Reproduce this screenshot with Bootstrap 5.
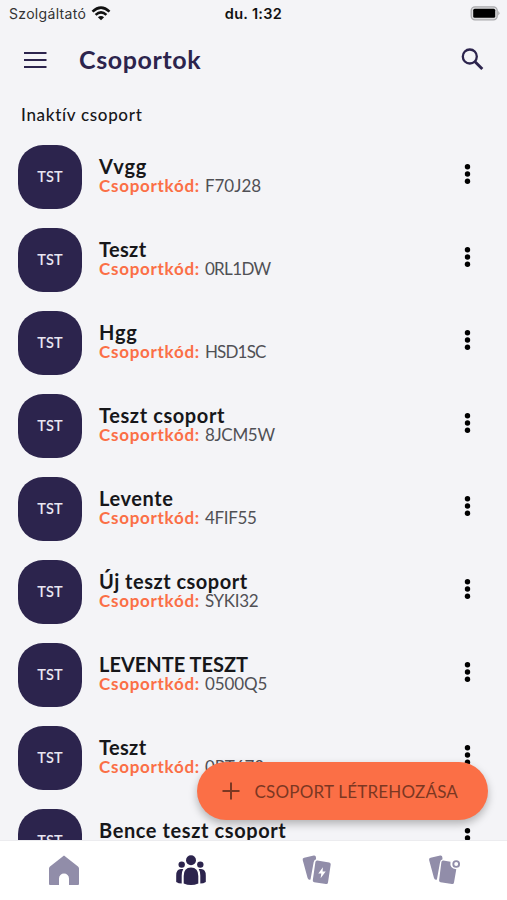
<!DOCTYPE html>
<html lang="hu">
<head>
<meta charset="utf-8">
<meta name="viewport" content="width=device-width, initial-scale=1">
<title>Csoportok</title>
<link href="https://cdn.jsdelivr.net/npm/bootstrap@5.3.0/dist/css/bootstrap.min.css" rel="stylesheet">
<style>
:root { --ink:#2c244d; --accent:#fb6f46; --muted-icon:#918da9; }
body { background:#f4f4f7; font-family:Lato,"Noto Sans",sans-serif; font-variant-ligatures:none; color:#17171a; }
svg { display:block; flex:none; }
.status { height:28px; font-family:Inter,sans-serif; font-size:14px; line-height:28px; padding:0 7px 0 9px; }
.carrier { letter-spacing:.32px; color:#333; }
.wifi { margin-left:5px; margin-bottom:2px; }
.battery { margin-bottom:2px; }
.clock { font-weight:600; font-size:14.5px; letter-spacing:.3px; color:#111; }
.toolbar { height:64px; padding:0 22px 0 24px; }
.title { font-size:25px; font-weight:700; letter-spacing:.6px; color:var(--ink); line-height:32px; margin:0 0 3px 32px; }
.section-title { height:43px; padding:11px 21px 0; font-size:17px; font-weight:500; line-height:24px; letter-spacing:.68px; }
.group-row { height:83px; padding:9.5px 36px 0 18px; }
.tile { width:64px; height:64px; border-radius:25px; background:var(--ink); color:#e9e6f2; font-size:14.5px; line-height:22px; font-weight:600; letter-spacing:.1px; flex:none; }
.info { margin:11px 0 0 17px; white-space:nowrap; }
.group-name { font-size:20px; line-height:20px; font-weight:700; }
.code-line { font-size:17px; line-height:19px; }
.code-label { color:var(--accent); font-weight:700; letter-spacing:.72px; }
.code-value { color:#505055; margin-left:.6px; }
.dots { margin-top:18.5px; }
.fab { left:196.5px; top:762px; width:291px; height:58px; border-radius:29px; background:var(--accent); color:#7b3722; box-shadow:0 4px 9px rgba(0,0,0,.27); padding-left:25px; font-size:17px; white-space:nowrap; }
.fab-text { letter-spacing:.2px; margin:1px 0 0 15px; }
.tabs { height:59px; box-shadow:0 -1px 0 #ececef; }
.tabs a { flex:1 1 0; padding:13px 0 0 1px; color:var(--muted-icon); }
.tabs a.current { color:var(--ink); }
.t-3{letter-spacing:.35px}.t-5{letter-spacing:.5px}.t-6{letter-spacing:.6px}.t-8{letter-spacing:.85px}
.n-1{letter-spacing:-.1px}.n-3{letter-spacing:-.3px}.n-6{letter-spacing:-.65px}.n-8{letter-spacing:-.8px}
</style>
<script src="https://cdn.jsdelivr.net/npm/bootstrap@5.3.0/dist/js/bootstrap.bundle.min.js"></script>
</head>
<body>
<div class="vh-100 d-flex flex-column overflow-hidden position-relative">
  <header class="flex-shrink-0">
    <div class="status d-flex align-items-center position-relative">
      <span class="carrier">Szolgáltató</span>
      <svg class="wifi" width="20" height="15" viewBox="0 0 20 15"><g fill="none" stroke="#111" stroke-width="2.6"><path d="M1.500 5.600Q10-2.400 18.500 5.600"/><path d="M4.600 8.900Q10 4 15.400 8.900"/></g><path d="M10 14.300L6.900 11.200Q10 8.700 13.100 11.200Z" fill="#111"/></svg>
      <span class="clock position-absolute start-50 translate-middle-x">du. 1:32</span>
      <svg class="battery ms-auto" width="30" height="16" viewBox="0 0 30 16"><rect x="1.200" y="1.800" width="26" height="13" rx="3.800" fill="#dcdcde" stroke="#aaaaad" stroke-width="1.300"/><rect x="3.200" y="3.800" width="22" height="9" rx="1.500" fill="#000"/><path d="M28.400 6.100q2 2.200 0 4.400z" fill="#999"/></svg>
    </div>
    <div class="toolbar d-flex align-items-center">
      <svg width="23" height="18" viewBox="0 0 23 18"><path d="M0 2H22.500M0 9H22.500M0 16H22.500" stroke="#2c244d" stroke-width="2.200"/></svg>
      <h1 class="title">Csoportok</h1>
      <svg class="ms-auto" width="24" height="24" viewBox="0 0 24 24"><circle cx="8.800" cy="8.500" r="7" fill="none" stroke="#2c244d" stroke-width="2.300"/><path d="M13.800 13.500L21.300 21" stroke="#2c244d" stroke-width="2.900"/></svg>
    </div>
  </header>
  <div class="section-title flex-shrink-0">Inaktív csoport</div>
  <main id="groups" class="flex-grow-1 overflow-hidden"></main>
  <button class="fab border-0 position-absolute d-flex align-items-center z-1"><svg width="18" height="18" viewBox="0 0 18 18"><path d="M9 .5V17.500M.5 9H17.500" stroke="#7b3722" stroke-width="2"/></svg><span class="fab-text">CSOPORT LÉTREHOZÁSA</span></button>
  <nav class="tabs bg-white d-flex flex-shrink-0">
    <a class="d-flex justify-content-center" href="#" aria-label="Kezdőlap"><svg width="32" height="32" viewBox="0 0 32 32"><path d="M16 1.500L30 12.500Q31 13.300 31 14.500V30Q31 31 30 31H21V24.500a5 5 0 0 0-10 0V31H2Q1 31 1 30V14.500Q1 13.300 2 12.500Z" fill="currentColor"/></svg></a>
    <a class="current d-flex justify-content-center" href="#" aria-label="Csoportok"><svg width="32" height="32" viewBox="0 0 32 32" fill="currentColor"><circle cx="16" cy="6.300" r="5"/><circle cx="6.700" cy="10.600" r="3.200"/><circle cx="25.300" cy="10.600" r="3.200"/><path d="M8.700 22q0-8.500 7.300-8.500t7.300 8.500v7.500q-7.300 3-14.600 0z"/><path d="M8.300 15Q6.700 17.500 6.700 21.500V29.500q-3.200 0-5.500-1.500V21.500q0-6.500 4.700-6.500zM23.700 15q1.600 2.500 1.600 6.500V29.500q3.200 0 5.500-1.500V21.500q0-6.500-4.700-6.500z"/></svg></a>
    <a class="d-flex justify-content-center" href="#" aria-label="Villámkártyák"><svg width="32" height="32" viewBox="0 0 32 32" fill="currentColor"><path d="M3.200 3.700L12.800 1.600q2-.3 2.100 1.500l.2 2.100q-2 .7-2.400 2.700L9.500 25.500q-2.200.8-2.900-1.400L1.700 6q-.5-1.900 1.500-2.300z"/><path d="M16.300 6.600L28.200 8.500q1.700.3 1.500 2L27 28.500q-.3 1.800-2 1.500L13.200 28.200q-1.700-.3-1.400-2L14.400 8.100q.3-1.700 1.900-1.500z"/><path d="M21.900 13.200L17.300 19.400H20.300L19.600 24.300 24.700 17.500H21.600Z" fill="#fff"/></svg></a>
    <a class="d-flex justify-content-center" href="#" aria-label="Kártyák"><svg width="34" height="32" viewBox="0 0 34 32" fill="currentColor"><path d="M3.600 3.700L13.200 1.600q2-.3 2.100 1.500l.2 2.100q-2 .7-2.400 2.700L9.900 25.500q-2.200.8-2.900-1.400L2.100 6q-.5-1.900 1.500-2.300z"/><path d="M16.300 6.600L23.500 7.700Q22.300 14.500 29.300 15.300L27 28.500q-.3 1.800-2 1.500L13.500 28.200q-1.700-.3-1.400-2L14.400 8.100q.3-1.700 1.900-1.500z"/><circle cx="29.200" cy="10" r="2.900" fill="none" stroke="currentColor" stroke-width="1.900"/></svg></a>
  </nav>
</div>
<script>
const groups = [
  ["Vvgg", "t-8", "F70J28", ""],
  ["Teszt", "t-3", "0RL1DW", "n-6"],
  ["Hgg", "t-8", "HSD1SC", "n-8"],
  ["Teszt csoport", "t-6", "8JCM5W", "n-3"],
  ["Levente", "t-6", "4FIF55", "n-3"],
  ["Új teszt csoport", "t-5", "SYKI32", "n-3"],
  ["LEVENTE TESZT", "", "0500Q5", "n-1"],
  ["Teszt", "t-3", "0RT673", "n-1"],
  ["Bence teszt csoport", "t-6", "", ""]
];
document.getElementById("groups").innerHTML = groups.map(([name, nameFit, code, codeFit]) => `
  <div class="group-row d-flex align-items-start">
    <div class="tile d-flex align-items-center justify-content-center">TST</div>
    <div class="info">
      <div class="group-name ${nameFit}">${name}</div>
      ${code ? `<div class="code-line"><span class="code-label">Csoportkód:</span> <span class="code-value ${codeFit}">${code}</span></div>` : ""}
    </div>
    <svg class="dots ms-auto" width="7" height="22" viewBox="0 0 7 22"><circle cx="3.500" cy="3.700" r="2.700"/><circle cx="3.500" cy="11" r="2.700"/><circle cx="3.500" cy="18.300" r="2.700"/></svg>
  </div>`).join("");
</script>
</body>
</html>
